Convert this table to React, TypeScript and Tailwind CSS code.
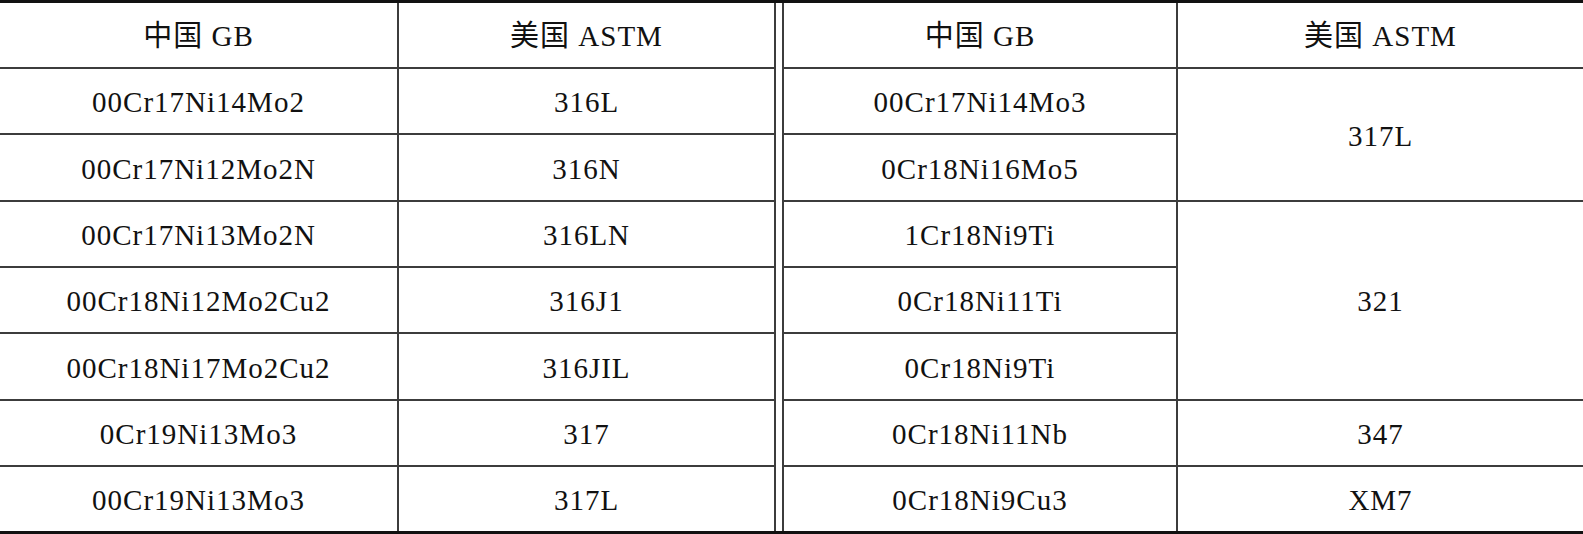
const left = [
  "00Cr17Ni14Mo2",
  "00Cr17Ni12Mo2N",
  "00Cr17Ni13Mo2N",
  "00Cr18Ni12Mo2Cu2",
  "00Cr18Ni17Mo2Cu2",
  "0Cr19Ni13Mo3",
  "00Cr19Ni13Mo3",
];
const leftUs = ["316L", "316N", "316LN", "316J1", "316JIL", "317", "317L"];
const right = [
  "00Cr17Ni14Mo3",
  "0Cr18Ni16Mo5",
  "1Cr18Ni9Ti",
  "0Cr18Ni11Ti",
  "0Cr18Ni9Ti",
  "0Cr18Ni11Nb",
  "0Cr18Ni9Cu3",
];

const cell = "border-y-2 border-[#3c3c3c] text-center align-middle p-0 pt-1";
const vline = "border-r-2 border-[#3c3c3c]";

export default function App() {
  return (
    <div className="w-[1583px] h-[534px] overflow-hidden bg-white text-[#111] font-['Liberation_Serif','Noto_Sans_CJK_SC',serif] text-[29px] tracking-[1px]">
      <table className="w-full h-[534px] table-fixed border-collapse border-t-[3px] border-b-[3px] border-t-[#111] border-b-[#111]">
        <colgroup>
          <col className="w-[398px]" />
          <col className="w-[377px]" />
          <col className="w-[8px]" />
          <col className="w-[394px]" />
          <col />
        </colgroup>
        <tbody>
          <tr className="h-[65px]">
            <td className={`${cell} ${vline} border-t-0`}>中国 GB</td>
            <td className={`${cell} ${vline} border-t-0`}>美国 ASTM</td>
            <td rowSpan={8} className="border-x-2 border-[#3c3c3c] p-0" />
            <td className={`${cell} ${vline} border-t-0`}>中国 GB</td>
            <td className={`${cell} border-t-0`}>美国 ASTM</td>
          </tr>
          {left.map((gb, i) => (
            <tr key={gb} className="h-[65px]">
              <td className={`${cell} ${vline} ${i === 6 ? "border-b-0" : ""}`}>{gb}</td>
              <td className={`${cell} ${vline} ${i === 6 ? "border-b-0" : ""}`}>{leftUs[i]}</td>
              <td className={`${cell} ${vline} ${i === 6 ? "border-b-0" : ""}`}>{right[i]}</td>
              {i === 0 && (
                <td rowSpan={2} className={cell}>
                  317L
                </td>
              )}
              {i === 2 && (
                <td rowSpan={3} className={cell}>
                  321
                </td>
              )}
              {i === 5 && <td className={cell}>347</td>}
              {i === 6 && <td className={`${cell} border-b-0`}>XM7</td>}
            </tr>
          ))}
        </tbody>
      </table>
    </div>
  );
}
